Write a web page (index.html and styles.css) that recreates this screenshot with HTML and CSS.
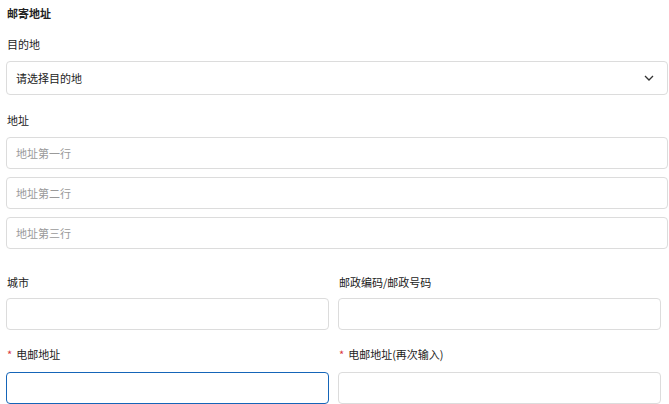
FILE: index.html
```html
<!DOCTYPE html>
<html lang="zh-CN">
<head>
  <meta charset="UTF-8" />
  <title>邮寄地址</title>
  <link rel="stylesheet" href="styles.css">
</head>
<body>
  <form class="address-form">
    <h2 class="section-title">邮寄地址</h2>

    <div class="field">
      <label class="field-label">目的地</label>
      <div class="select-box">
        <span>请选择目的地</span>
        <svg class="chevron" width="10" height="6" viewBox="0 0 10 6">
          <polyline points="1,1 5,5 9,1" fill="none" stroke="#333" stroke-width="1.3" />
        </svg>
      </div>
    </div>

    <div class="field">
      <label class="field-label">地址</label>
      <div class="address-lines">
        <input type="text" placeholder="地址第一行">
        <input type="text" placeholder="地址第二行">
        <input type="text" placeholder="地址第三行">
      </div>
    </div>

    <div class="two-col">
      <div class="field">
        <label class="field-label">城市</label>
        <input type="text">
      </div>
      <div class="field">
        <label class="field-label">邮政编码/邮政号码</label>
        <input type="text">
      </div>
      <div class="field required">
        <label class="field-label"><span class="req">*</span>电邮地址</label>
        <input type="text" class="focused">
      </div>
      <div class="field required">
        <label class="field-label"><span class="req">*</span>电邮地址(再次输入)</label>
        <input type="text">
      </div>
    </div>
  </form>
</body>
</html>
```

FILE: styles.css
```css
body {
  margin: 0;
  padding: 0;
  font-family: "Noto Sans CJK SC", "Liberation Sans", sans-serif;
  font-size: 11px;
  color: #222;
  background: #fff;
}

.address-form {
  padding: 5px 1px 0 6px;
}

.section-title {
  margin: 0 0 15px 1px;
  font-size: 11px;
  font-weight: bold;
  line-height: 16px;
}

.field {
  margin-bottom: 17px;
}

.field-label {
  display: block;
  line-height: 16px;
  margin: 0 0 9px 1px;
}

.select-box {
  box-sizing: border-box;
  height: 34px;
  border: 1px solid #dcdcdc;
  border-radius: 4px;
  display: flex;
  align-items: center;
  justify-content: space-between;
  padding: 0 13px 0 9px;
}

.chevron {
  display: block;
}

input {
  box-sizing: border-box;
  display: block;
  width: 100%;
  height: 32px;
  margin: 0;
  border: 1px solid #dcdcdc;
  border-radius: 4px;
  padding: 0 9px;
  font-family: inherit;
  font-size: 11px;
  color: #222;
  outline: none;
}

input::placeholder {
  color: #9a9a9a;
}

input.focused {
  border-color: #1565b8;
}

.address-lines {
  display: flex;
  flex-direction: column;
  gap: 8px;
}

.two-col {
  display: grid;
  grid-template-columns: 1fr 1fr;
  column-gap: 9px;
  padding-top: 8px;
  margin-right: 7px;
}

.two-col .field {
  margin-bottom: 16px;
}

.two-col .field-label {
  margin-bottom: 8px;
}

.two-col .required .field-label {
  margin-bottom: 10px;
}

.req {
  color: #d9363e;
  margin-right: 4px;
}
```
